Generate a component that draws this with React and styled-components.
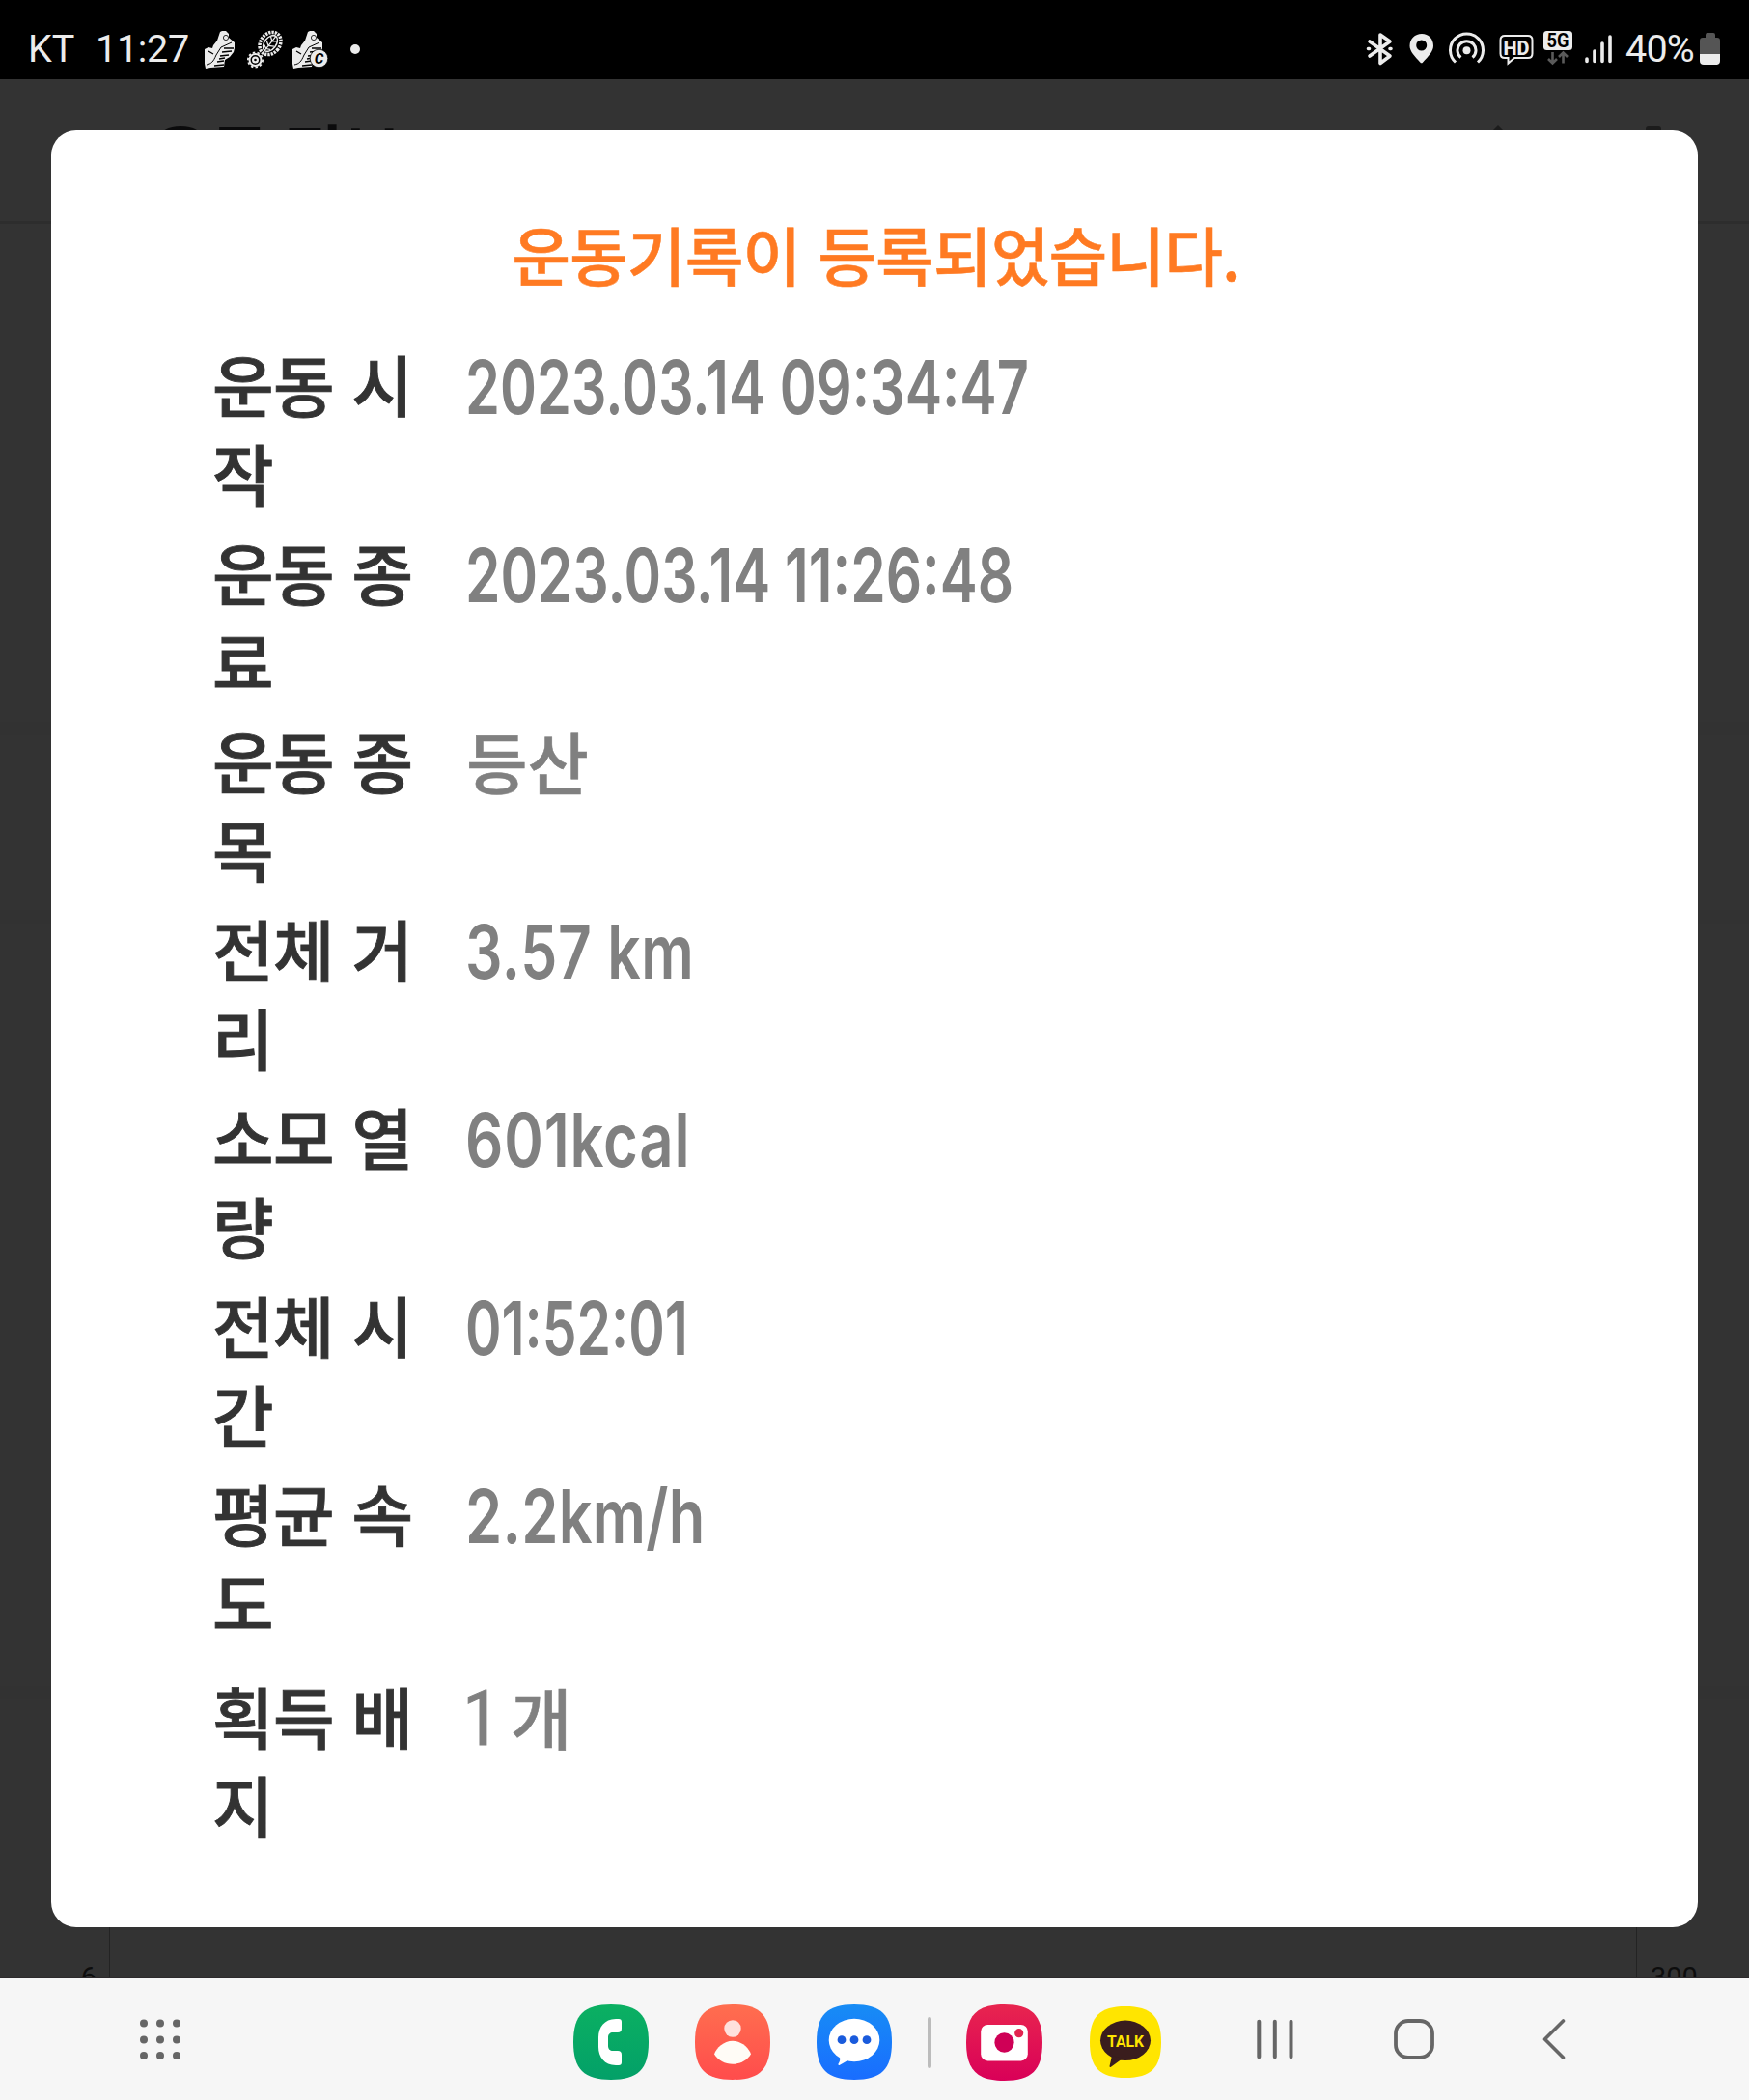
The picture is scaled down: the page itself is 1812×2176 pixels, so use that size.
import styled, { createGlobalStyle } from 'styled-components';

const GlobalStyle = createGlobalStyle`
	* {
		box-sizing: border-box;
	}
	body {
		margin: 0;
		background-color: #000;
	}
`;

const Screen = styled.div`
	display: flex;
	flex-direction: column;
	width: 1812px;
	height: 2176px;
	overflow: hidden;
	font-family: Roboto, 'Noto Sans CJK KR', sans-serif;
`;

const StatusBar = styled.div`
	display: flex;
	align-items: flex-start;
	justify-content: space-between;
	flex: none;
	height: 82px;
	padding: 31px 29px 0 29px;
	background-color: #000;
	color: #ececec;
	font-size: 39.5px;
	line-height: 40px;
`;

const StatusGroup = styled.div`
	display: flex;
	align-items: flex-start;
	white-space: nowrap;
`;

const StatusText = styled.div`
	width: ${({ $width }) => $width}px;
	margin-left: ${({ $gap = 0 }) => $gap}px;
	letter-spacing: ${({ $spacing = 0 }) => $spacing}px;
`;

const StatusIcon = styled.svg`
	display: block;
	flex: none;
	margin-left: ${({ $gap = 0 }) => $gap}px;
`;

const Page = styled.div`
	position: relative;
	display: flex;
	flex-direction: column;
	flex: 1;
	overflow: hidden;
	background-color: #333;
	border-bottom: 1px solid #2d2a2c;
`;

const PageHeader = styled.div`
	display: flex;
	flex: none;
	align-items: flex-start;
	justify-content: space-between;
	height: 150px;
	padding: 35px 91px 0 157px;
	border-bottom: 3px solid #2d2d2d;
	color: #0b0b0c;
	font-size: 66px;
	font-weight: 700;
	line-height: 92px;
`;

const HeaderIcons = styled.div`
	display: flex;
	gap: 125px;
	padding-top: 13px;
`;

const PageSection = styled.div`
	flex: none;
	height: ${({ $height }) => $height}px;
	border-bottom: 14px solid #323232;
`;

const ChartArea = styled.div`
	display: flex;
	flex: 1;
	align-items: flex-end;
	justify-content: space-between;
	color: #0d0d0d;
	font-size: 29px;
	line-height: 34px;
`;

const ChartLabel = styled.div`
	flex: none;
	width: ${({ $width }) => $width}px;
	height: 17px;
	padding: 0 13px 0 14px;
	text-align: ${({ $align }) => $align};
`;

const ChartPlot = styled.div`
	flex: 1;
	align-self: stretch;
	border: solid #232323;
	border-width: 0 1px;
`;

const Modal = styled.div`
	position: absolute;
	top: 53px;
	left: 53px;
	width: 1706px;
	height: 1862px;
	padding-top: 79px;
	border-radius: 26px;
	background-color: #fff;
	font-family: 'Noto Sans CJK KR', sans-serif;
	font-weight: 500;
`;

const ModalTitle = styled.h1`
	margin: 0;
	height: 137px;
	padding-left: 3px;
	color: #ff7a22;
	font-size: 66px;
	font-weight: 500;
	line-height: 96px;
	letter-spacing: -0.9px;
	word-spacing: 4px;
	text-align: center;
	-webkit-text-stroke: 0.5px;
`;

const Row = styled.div`
	display: grid;
	grid-template-columns: 222px 1fr;
	column-gap: 40px;
	height: ${({ $last }) => ($last ? 184 : 195)}px;
	margin-top: ${({ $last }) => ($last ? 15 : 0)}px;
	padding-left: 167px;
	line-height: 92px;
`;

const Label = styled.div`
	color: #333;
	font-size: 69px;
	letter-spacing: -0.5px;
	word-spacing: 3.5px;
	word-break: break-all;
	-webkit-text-stroke: 0.9px;
`;

const Value = styled.div`
	justify-self: start;
	padding-top: 4px;
	color: #808080;
	font-family: Inter, 'Noto Sans CJK KR', sans-serif;
	font-size: 77px;
	font-weight: 560;
	letter-spacing: ${({ $spacing = 0 }) => $spacing}px;
	transform: scaleX(${({ $squeeze }) => $squeeze});
	transform-origin: left;
	white-space: pre;
`;

const KoreanValue = styled.div`
	display: flex;
	gap: 18px;
	padding: 1px 0 0 1px;
	color: #808080;
	font-size: 69px;
	-webkit-text-stroke: 0.5px;
`;

const Count = styled.span`
	padding-top: 3px;
	font-family: 'Roboto Condensed', sans-serif;
	font-size: 79px;
	font-weight: 400;
	width: 28px;
	text-indent: -4px;
	-webkit-text-stroke: 1px;
`;

const NavBar = styled.div`
	display: flex;
	flex: none;
	align-items: center;
	height: 126px;
	padding-left: 145px;
	background-color: #f6f6f6;
`;

const NavIcon = styled.svg`
	display: block;
	flex: none;
	margin-left: ${({ $gap = 0 }) => $gap}px;
`;

const AppIcon = styled(NavIcon)`
	margin-top: 6px;
`;

const Divider = styled.div`
	width: 4px;
	height: 53px;
	margin: 7px 0 0 37px;
	border-radius: 2px;
	background-color: #bcbcbc;
`;

const records = [
	{ label: '운동 시작', value: '2023.03.14 09:34:47', squeeze: 0.748 },
	{ label: '운동 종료', value: '2023.03.14 11:26:48', squeeze: 0.76 },
	{ label: '운동 종목', korean: '등산' },
	{ label: '전체 거리', value: '3.57 km', squeeze: 0.786, spacing: 0.8 },
	{ label: '소모 열량', value: '601kcal', squeeze: 0.8, spacing: 1 },
	{ label: '전체 시간', value: '01:52:01', squeeze: 0.739 },
	{ label: '평균 속도', value: '2.2km/h', squeeze: 0.796, spacing: 0.3 },
	{ label: '획득 배지', count: 1, korean: '개' },
];

const SQUIRCLE = 'M39 0C67 0 78 11 78 39S67 78 39 78S0 67 0 39S11 0 39 0Z';

const Shoe = () => (
	<>
		<path
			d="M16 2l2-1h4l3 3v4l6 5v6l-1 4-4 5-5 3-1 7-14 1-5 1-1-5V20l4-2 4 1 1-3 4-5z"
			fill="#ececec"
		/>
		<path d="M2 36c5-1 7-3 10-10l5-8 11-5" fill="none" stroke="#000" strokeWidth="1" />
		<circle cx="22" cy="8" r="2.6" fill="none" stroke="#000" strokeWidth="0.8" />
		<path
			d="M4 22l5 3M20 19l10 0M18 23l10-1M16 27l9-1M15 30l6-1M13 33l7-1M10 37l10-1"
			stroke="#000"
			strokeWidth="1.3"
		/>
	</>
);

const StatusLeft = () => (
	<StatusGroup>
		<StatusText $width={70}>KT</StatusText>
		<StatusText $width={100} $spacing={-0.3}>
			11:27
		</StatusText>
		<StatusIcon $gap={13} width="32" height="42" viewBox="0 0 32 42">
			<Shoe />
		</StatusIcon>
		<StatusIcon $gap={12} width="38" height="40" viewBox="0 0 38 40">
			<g transform="rotate(38 24 14)" stroke="#ececec" fill="none">
				<ellipse cx="24" cy="14" rx="10" ry="12.5" strokeWidth="3.5" strokeDasharray="2.3 1" />
				<ellipse cx="24" cy="14" rx="6" ry="9.5" strokeWidth="1.5" />
				<path d="M24 4v20M20 8l4 3 4-3M19 14l5 3 5-3M20 19l4 2 4-2" strokeWidth="1.3" />
			</g>
			<g stroke="#ececec" fill="none">
				<circle cx="8.5" cy="31" r="6" strokeWidth="2" />
				<circle cx="8.5" cy="31" r="7.6" strokeWidth="1.8" strokeDasharray="2.4 2.3" />
				<circle cx="8.5" cy="31" r="2.4" strokeWidth="2.2" />
			</g>
		</StatusIcon>
		<StatusIcon $gap={9} width="38" height="42" viewBox="0 0 38 42">
			<Shoe />
			<circle cx="27.5" cy="29.5" r="9.3" fill="#ececec" stroke="#000" strokeWidth="0.8" />
			<text
				x="27.5"
				y="35"
				fill="#000"
				fontSize="15"
				fontStyle="italic"
				fontWeight="700"
				textAnchor="middle"
			>
				C
			</text>
		</StatusIcon>
		<StatusIcon $gap={22} width="12" height="40" viewBox="0 0 12 40">
			<circle cx="5" cy="20" r="5" fill="#ececec" />
		</StatusIcon>
	</StatusGroup>
);

const StatusRight = () => (
	<StatusGroup>
		<StatusIcon width="28" height="40" viewBox="0 0 28 40">
			<path
				d="M4 12l21 15-10 7.500V5l10 7L4 27M2.500 19.500h1M25 19.500h1"
				fill="none"
				stroke="#ececec"
				strokeWidth="3.6"
				strokeLinecap="round"
				strokeLinejoin="round"
			/>
		</StatusIcon>
		<StatusIcon $gap={17} width="26" height="40" viewBox="0 0 26 40">
			<path
				fillRule="evenodd"
				d="M13 4C6 4 .5 9 .5 16.500c0 6 5.500 11 10.800 17q1.400 1.700 2.800 0C19.500 27.500 25 22.500 25 16.500 25 9 20 4 13 4zm-.3 6.500a5.500 5.500 0 1 1 0 11 5.500 5.500 0 0 1 0-11z"
				fill="#ececec"
			/>
		</StatusIcon>
		<StatusIcon $gap={14} width="38" height="40" viewBox="0 0 38 40">
			<circle cx="19.500" cy="21.300" r="4" fill="#ececec" />
			<path
				d="M13.500 28.500a9.500 9.500 0 1 1 12 0M8 33.500a17 17 0 1 1 23 0"
				fill="none"
				stroke="#ececec"
				strokeWidth="3"
			/>
		</StatusIcon>
		<StatusIcon $gap={15} width="36" height="40" viewBox="0 0 36 40">
			<path
				d="M6 6h24q4.500 0 4.500 4.500v14q0 4.500-4.500 4.500H16l-6.500 5.500V29H6q-4.500 0-4.500-4.500v-14Q1.500 6 6 6z"
				fill="none"
				stroke="#ececec"
				strokeWidth="2"
			/>
			<text
				x="18"
				y="25.500"
				fill="#ececec"
				fontSize="21"
				fontWeight="800"
				textAnchor="middle"
				textLength="27"
				lengthAdjust="spacingAndGlyphs"
			>
				HD
			</text>
		</StatusIcon>
		<StatusIcon $gap={10} width="30" height="40" viewBox="0 0 30 40">
			<rect y="1" width="30" height="20" rx="3.500" fill="#ececec" />
			<text
				x="15"
				y="18"
				fill="#000"
				fontSize="19.500"
				fontWeight="700"
				textAnchor="middle"
				textLength="23"
				lengthAdjust="spacingAndGlyphs"
			>
				5G
			</text>
			<path
				d="M9.500 23v11M5 30l4.500 4.500L14 30M20.500 34.500v-11M16 28l4.500-4.500L25 28"
				fill="none"
				stroke="#5a5a5a"
				strokeWidth="2.600"
			/>
		</StatusIcon>
		<StatusIcon $gap={13} width="28" height="40" viewBox="0 0 28 40">
			<path
				d="M2 30v2.500M10 22v10.500M18 14v18.500M26 7v25.500"
				stroke="#ececec"
				strokeWidth="3.600"
				strokeLinecap="round"
			/>
		</StatusIcon>
		<StatusText $gap={14} $width={75} $spacing={-0.8}>
			40%
		</StatusText>
		<StatusIcon $gap={2} width="22" height="40" viewBox="0 0 22 40">
			<path d="M6 8V5q0-2 2-2h6q2 0 2 2v3h2q3 0 3 3v14H0V11q0-3 3-3z" fill="#555" />
			<path d="M0 25h21v7q0 4-4 4H4q-4 0-4-4z" fill="#ececec" />
		</StatusIcon>
	</StatusGroup>
);

const Dock = () => (
	<NavBar>
		<NavIcon width="42" height="42" viewBox="0 0 42 42" fill="#666">
			{[4.5, 21.5, 38].map((y) => [4, 21, 38].map((x) => <circle key={`${x}-${y}`} cx={x} cy={y} r="4" />))}
		</NavIcon>
		<AppIcon $gap={407} width="78" height="78" viewBox="0 0 78 78">
			<linearGradient id="phone" x2="0" y2="1">
				<stop stopColor="#0bb062" />
				<stop offset="1" stopColor="#03a068" />
			</linearGradient>
			<path d={SQUIRCLE} fill="url(#phone)" />
			<path
				d="M44 15C32 15 26 24 26 34V44C26 54 32 63 44 63H47a3 3 0 0 0 3-3V52a4 4 0 0 0-4-4H41c-3 0-5-2-5-5V34c0-3 2-5 5-5H46a4 4 0 0 0 4-4V18a3 3 0 0 0-3-3z"
				fill="#fff"
			/>
		</AppIcon>
		<AppIcon $gap={48} width="78" height="78" viewBox="0 0 78 78">
			<linearGradient id="contacts" x2="0" y2="1">
				<stop stopColor="#ff6e4f" />
				<stop offset="1" stopColor="#ff4c4c" />
			</linearGradient>
			<path d={SQUIRCLE} fill="url(#contacts)" />
			<circle cx="39" cy="25" r="8.7" fill="#ffe0dc" />
			<path
				d="M39 37.700C48 37.700 56 45 58 51.500C54 58 47 61.700 39 61.700S24 58 20 51.500C22 45 30 37.700 39 37.700z"
				fill="#fffcf6"
			/>
		</AppIcon>
		<AppIcon $gap={48} width="78" height="78" viewBox="0 0 78 78">
			<linearGradient id="messages" x2="0" y2="1">
				<stop stopColor="#178cf5" />
				<stop offset="1" stopColor="#196dff" />
			</linearGradient>
			<path d={SQUIRCLE} fill="url(#messages)" />
			<ellipse cx="39" cy="37" rx="26.300" ry="22.300" fill="#fff" />
			<path d="M24 53q1 5-1.500 8.500-.5 2 1.500 1.200L34 57z" fill="#fff" />
			<g fill="#1a5bdc">
				<circle cx="26" cy="36.700" r="4.400" />
				<circle cx="39" cy="36.700" r="4.400" />
				<circle cx="52" cy="36.700" r="4.400" />
			</g>
		</AppIcon>
		<Divider />
		<AppIcon $gap={36} width="79" height="79" viewBox="0 0 78 78">
			<linearGradient id="camera" x2="0" y2="1">
				<stop stopColor="#e8254f" />
				<stop offset="1" stopColor="#d90058" />
			</linearGradient>
			<path d={SQUIRCLE} fill="url(#camera)" />
			<rect x="15" y="20.700" width="48" height="37" rx="7" fill="#fff" />
			<circle cx="39" cy="39" r="10" fill="#cf0056" />
			<circle cx="54" cy="29.300" r="4.500" fill="#e22450" />
		</AppIcon>
		<AppIcon $gap={49} width="74" height="74" viewBox="0 0 74 74">
			<path d={SQUIRCLE} fill="#ffe500" transform="scale(.9487)" />
			<ellipse cx="37" cy="35.300" rx="26" ry="20.700" fill="#3a1d1d" />
			<path d="M23 51l-2.500 11q0 1.500 1.500.8L34 54z" fill="#3a1d1d" />
			<text
				x="37"
				y="41.500"
				fill="#ffe500"
				fontSize="17"
				fontWeight="700"
				textAnchor="middle"
				textLength="38"
				lengthAdjust="spacingAndGlyphs"
			>
				TALK
			</text>
		</AppIcon>
		<NavIcon $gap={99} width="38" height="42" viewBox="0 0 38 42">
			<path d="M2.300 2.800v36.400M18.800 2.800v36.400M35.500 2.800v36.400" stroke="#666" strokeWidth="4" strokeLinecap="round" />
		</NavIcon>
		<NavIcon $gap={104} width="42" height="42" viewBox="0 0 42 42">
			<rect x="2" y="2" width="38" height="38" rx="13" fill="none" stroke="#666" strokeWidth="3.800" />
		</NavIcon>
		<NavIcon $gap={112} width="24" height="42" viewBox="0 0 24 42">
			<path
				d="M21.500 2L2.500 21l19 19"
				fill="none"
				stroke="#666"
				strokeWidth="3.600"
				strokeLinecap="round"
				strokeLinejoin="round"
			/>
		</NavIcon>
	</NavBar>
);

const BackgroundPage = () => (
	<>
		<PageHeader>
			운동 정보
			<HeaderIcons>
				<svg width="56" height="56" viewBox="0 0 56 56">
					<path d="M28 0l20 20H8z" fill="#1c1c1c" />
				</svg>
				<svg width="16" height="56" viewBox="0 0 16 56">
					<rect y="1" width="16" height="55" rx="3" fill="#1c1c1c" />
				</svg>
			</HeaderIcons>
		</PageHeader>
		<PageSection $height={530} />
		<PageSection $height={195} />
		<PageSection $height={804} />
		<ChartArea>
			<ChartLabel $width={113} $align="right">
				6
			</ChartLabel>
			<ChartPlot />
			<ChartLabel $width={116} $align="left">
				300
			</ChartLabel>
		</ChartArea>
	</>
);

export default function App() {
	return (
		<Screen>
			<GlobalStyle />
			<StatusBar>
				<StatusLeft />
				<StatusRight />
			</StatusBar>
			<Page>
				<BackgroundPage />
				<Modal>
					<ModalTitle>운동기록이 등록되었습니다.</ModalTitle>
					{records.map(({ label, value, korean, count, squeeze, spacing }, index) => (
						<Row key={label} $last={index === records.length - 1}>
							<Label>{label}</Label>
							{korean ? (
								<KoreanValue>
									{count && <Count>{count}</Count>}
									{korean}
								</KoreanValue>
							) : (
								<Value $squeeze={squeeze} $spacing={spacing}>
									{value}
								</Value>
							)}
						</Row>
					))}
				</Modal>
			</Page>
			<Dock />
		</Screen>
	);
}
